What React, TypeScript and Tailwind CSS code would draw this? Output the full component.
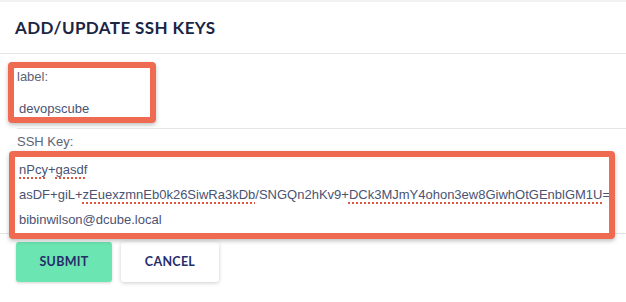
import React from 'react';

const dotted = 'underline decoration-dotted decoration-[#e0553f] decoration-2 underline-offset-[3px]';

export default function App() {
  return (
    <div className="h-[302px] w-[626px] overflow-hidden bg-white font-['Liberation_Sans',Arial,sans-serif]">
      <div className="h-[2px] bg-[#f1f1f1]" />

      {/* header */}
      <div className="flex h-[52px] items-center border-b border-[#e6e6e6] pl-[15px]">
        <h1 className="font-['Lato',sans-serif] text-[17px] font-bold tracking-[0.4px] text-[#1b2544]">
          ADD/UPDATE SSH KEYS
        </h1>
      </div>

      {/* label field (highlighted) */}
      <div className="pt-[8px]">
        <div className="ml-[8px] h-[61px] w-[148px] rounded-[4px] border-[6px] border-[#ee6a51] shadow-[0_2px_4px_rgba(0,0,0,0.25)]">
          <p className="pl-[3px] pt-[1px] text-[13px] leading-[16px] text-[#5d6375]">label:</p>
          <p className="pl-[5px] pt-[16px] text-[13px] leading-[16px] text-[#4a5373]">devopscube</p>
        </div>
      </div>

      {/* ssh key field */}
      <div className="ml-[17px] mt-[5px] border-t border-[#e6e6e6]">
        <p className="pt-[5px] text-[13px] leading-[16px] text-[#5d6375]">SSH Key:</p>
      </div>
      <div className="border-b border-[#e6e6e6] pl-[9px] pr-[11px] pt-[1px]">
        <div className="relative z-10 -mb-[6px] h-[88px] rounded-[4px] border-[6px] border-[#ee6a51] bg-white pl-[4px] shadow-[0_2px_4px_rgba(0,0,0,0.25)]">
          <div className="flex flex-col text-[13px] leading-[25px] text-[#4a5373]">
            <span className="whitespace-nowrap">
              <span className={dotted}>nPcy</span>+<span className={dotted}>gasdf</span>
            </span>
            <span className="overflow-hidden whitespace-nowrap">
              asDF+giL+<span className={dotted}>zEuexzmnEb0k26SiwRa3kDb</span>/SNGQn2hKv9+
              <span className={dotted}>DCk3MJmY4ohon3ew8GiwhOtGEnblGM1U</span>=
            </span>
            <span className="whitespace-nowrap">bibinwilson@dcube.local</span>
          </div>
        </div>
      </div>

      {/* actions */}
      <div className="flex gap-[9px] pl-[16px] pt-[8px]">
        <button className="flex h-[40px] w-[96px] items-center justify-center rounded-[3px] bg-[#6be5b1] font-['Lato',sans-serif] text-[12.5px] font-bold tracking-[0.3px] text-[#262d6b] shadow-[0_1px_3px_rgba(0,0,0,0.18)]">
          SUBMIT
        </button>
        <button className="flex h-[40px] w-[98px] items-center justify-center rounded-[3px] bg-white font-['Lato',sans-serif] text-[12.5px] font-bold tracking-[0.3px] text-[#262d6b] shadow-[0_1px_4px_rgba(0,0,0,0.2)]">
          CANCEL
        </button>
      </div>
    </div>
  );
}
